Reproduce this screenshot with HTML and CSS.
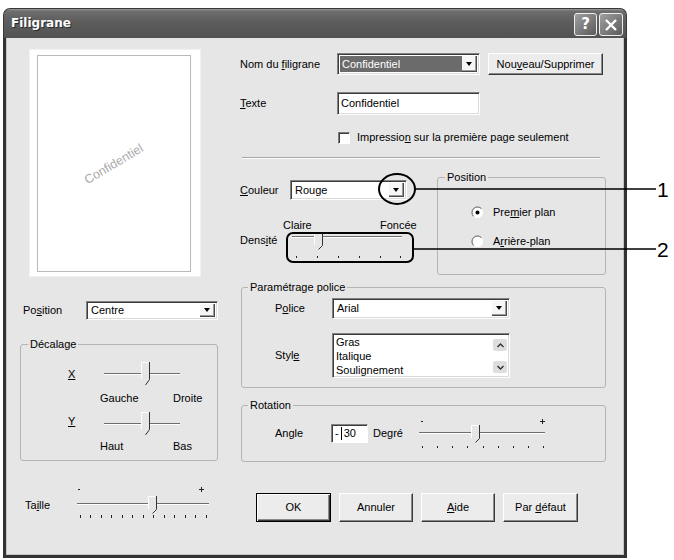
FILE: index.html
```html
<!DOCTYPE html>
<html lang="fr">
<head>
<meta charset="utf-8">
<title>Filigrane</title>
<link rel="stylesheet" href="styles.css">
</head>
<body>
<div class="stage">
  <div class="window">
    <div class="titlebar">
      <span class="title">Filigrane</span>
      <div class="tb-btns">
        <span class="tb-btn help">?</span>
        <span class="tb-btn close"><svg width="14" height="14" viewBox="0 0 14 14"><path d="M2 2L12 12M12 2L2 12" stroke="#fff" stroke-width="2.4"/></svg></span>
      </div>
    </div>
    <div class="client">
      <div class="left">
        <div class="preview"><div class="page"><span class="wm">Confidentiel</span></div></div>
        <div class="pos-row">
          <span class="lbl">Po<u>s</u>ition</span>
          <div class="combo w132"><span class="val">Centre</span><span class="arrow"></span></div>
        </div>
        <fieldset class="group dec">
          <legend>Décalage</legend>
          <div class="dec-grid">
            <span class="axis"><u>X</u></span>
            <svg class="sl" width="82" height="26" viewBox="0 0 82 26">
              <rect x="4" y="12" width="76" height="1" fill="#6e6e6e"/>
              <rect x="4" y="13" width="76" height="1" fill="#fff"/>
              <path d="M41 1H49V18L45 24L41 18Z" fill="#e6e6e6"/>
              <path d="M41.5 18V1.5H48.5" fill="none" stroke="#fff"/>
              <path d="M49.5 1V18.5L45.5 24" fill="none" stroke="#333"/>
            </svg>
            <span></span>
            <div class="ends"><span>Gauche</span><span>Droite</span></div>
            <span class="axis"><u>Y</u></span>
            <svg class="sl" width="82" height="26" viewBox="0 0 82 26">
              <rect x="4" y="12" width="76" height="1" fill="#6e6e6e"/>
              <rect x="4" y="13" width="76" height="1" fill="#fff"/>
              <path d="M41 1H49V18L45 24L41 18Z" fill="#e6e6e6"/>
              <path d="M41.5 18V1.5H48.5" fill="none" stroke="#fff"/>
              <path d="M49.5 1V18.5L45.5 24" fill="none" stroke="#333"/>
            </svg>
            <span></span>
            <div class="ends"><span>Haut</span><span>Bas</span></div>
          </div>
        </fieldset>
        <div class="taille-row">
          <span class="lbl">Ta<u>i</u>lle</span>
          <svg class="sl" width="140" height="37" viewBox="0 0 140 37">
            <rect x="6" y="5" width="2" height="1" fill="#222"/>
            <rect x="127" y="5" width="5" height="1" fill="#222"/>
            <rect x="129" y="3" width="1" height="5" fill="#222"/>
            <rect x="5" y="19" width="132" height="1" fill="#6e6e6e"/>
            <rect x="5" y="20" width="132" height="1" fill="#fff"/>
            <path d="M76 12H84V25L80 29L76 25Z" fill="#e6e6e6"/>
            <path d="M76.5 25V12.5H83.5" fill="none" stroke="#fff"/>
            <path d="M84.5 12V25.5L80.5 29.5" fill="none" stroke="#333"/>
            <g fill="#222">
              <rect x="8" y="31" width="1" height="3"/><rect x="18" y="31" width="1" height="3"/><rect x="29" y="31" width="1" height="3"/><rect x="39" y="31" width="1" height="3"/><rect x="50" y="31" width="1" height="3"/><rect x="60" y="31" width="1" height="3"/><rect x="71" y="31" width="1" height="3"/><rect x="81" y="31" width="1" height="3"/><rect x="92" y="31" width="1" height="3"/><rect x="102" y="31" width="1" height="3"/><rect x="113" y="31" width="1" height="3"/><rect x="123" y="31" width="1" height="3"/><rect x="134" y="31" width="1" height="3"/>
            </g>
          </svg>
        </div>
      </div>

      <div class="right">
        <div class="r-row r1">
          <span class="lbl w97">Nom du <u>f</u>iligrane</span>
          <div class="combo w143"><span class="val sel">Confidentiel</span><span class="arrow"></span></div>
          <span class="btn nouv"><span>Nou<u>v</u>eau/Supprimer</span></span>
        </div>
        <div class="r-row r2">
          <span class="lbl w97"><u>T</u>exte</span>
          <div class="edit w143">Confidentiel</div>
        </div>
        <div class="r-row r3">
          <span class="check"></span>
          <span>Impressio<u>n</u> sur la première page seulement</span>
        </div>
        <div class="sep"></div>
        <div class="mid">
          <div class="mid-left">
            <div class="r-row couleur">
              <span class="lbl w50"><u>C</u>ouleur</span>
              <div class="combo w117"><span class="val">Rouge</span><span class="arrow"></span></div>
            </div>
            <div class="cf"><span class="claire">Claire</span><span>Foncée</span></div>
            <div class="dens">
              <span class="lbl w48">Dens<u>i</u>té</span>
              <svg class="sl" width="120" height="28" viewBox="0 0 120 28">
                <rect x="4" y="4" width="110" height="1" fill="#6e6e6e"/>
                <rect x="4" y="5" width="110" height="1" fill="#fff"/>
                <path d="M26 0H34V13L30 17L26 13Z" fill="#e6e6e6"/>
                <path d="M26.5 13V0.5H33.5" fill="none" stroke="#fff"/>
                <path d="M34.5 0V13.5L30.5 17.5" fill="none" stroke="#333"/>
                <g fill="#222">
                  <rect x="8" y="24" width="1" height="2"/><rect x="29" y="24" width="1" height="2"/><rect x="50" y="24" width="1" height="2"/><rect x="71" y="24" width="1" height="2"/><rect x="92" y="24" width="1" height="2"/><rect x="112" y="24" width="1" height="2"/>
                </g>
              </svg>
            </div>
          </div>
          <fieldset class="group posg">
            <legend>Position</legend>
            <div class="radio-row first">
              <svg width="13" height="13" viewBox="0 0 13 13"><circle cx="6.5" cy="6.5" r="5.5" fill="#fff"/><path d="M2.6 10.4A5.5 5.5 0 0 1 10.4 2.6" stroke="#555" fill="none"/><circle cx="6.5" cy="6.5" r="2" fill="#000"/></svg>
              <span>Pre<u>m</u>ier plan</span>
            </div>
            <div class="radio-row">
              <svg width="13" height="13" viewBox="0 0 13 13"><circle cx="6.5" cy="6.5" r="5.5" fill="#fff"/><path d="M2.6 10.4A5.5 5.5 0 0 1 10.4 2.6" stroke="#555" fill="none"/></svg>
              <span>A<u>r</u>rière-plan</span>
            </div>
          </fieldset>
        </div>
        <fieldset class="group police">
          <legend>Paramétrage police</legend>
          <div class="g-row pol">
            <span class="lbl w57">P<u>o</u>lice</span>
            <div class="combo w178"><span class="val">Arial</span><span class="arrow"></span></div>
          </div>
          <div class="g-row sty">
            <span class="lbl w57">Styl<u>e</u></span>
            <div class="listbox w178">
              <div class="items"><div>Gras</div><div>Italique</div><div>Soulignement</div></div>
              <div class="sb">
                <span class="sbb"><svg width="7" height="5" viewBox="0 0 7 5"><path d="M0.5 4L3.5 1L6.5 4" fill="none" stroke="#333" stroke-width="1.4"/></svg></span>
                <span class="sbb"><svg width="7" height="5" viewBox="0 0 7 5"><path d="M0.5 1L3.5 4L6.5 1" fill="none" stroke="#333" stroke-width="1.4"/></svg></span>
              </div>
            </div>
          </div>
        </fieldset>
        <fieldset class="group rot">
          <legend>Rotation</legend>
          <div class="g-row ang">
            <span class="lbl w56">Angle</span>
            <div class="spin"><span class="minus">-</span><span class="caret"></span><span>30</span></div>
            <span class="deg">Degré</span>
            <svg class="sl" width="132" height="36" viewBox="0 0 132 36">
              <rect x="5" y="6" width="2" height="1" fill="#222"/>
              <rect x="124" y="6" width="5" height="1" fill="#222"/>
              <rect x="126" y="4" width="1" height="5" fill="#222"/>
              <rect x="3" y="17" width="126" height="1" fill="#6e6e6e"/>
              <rect x="3" y="18" width="126" height="1" fill="#fff"/>
              <path d="M55 10H63V23L59 27L55 23Z" fill="#e6e6e6"/>
              <path d="M55.5 23V10.5H62.5" fill="none" stroke="#fff"/>
              <path d="M63.5 10V23.5L59.5 27.5" fill="none" stroke="#333"/>
              <g fill="#222">
                <rect x="6" y="31" width="1" height="2"/><rect x="21" y="31" width="1" height="2"/><rect x="36" y="31" width="1" height="2"/><rect x="51" y="31" width="1" height="2"/><rect x="67" y="31" width="1" height="2"/><rect x="82" y="31" width="1" height="2"/><rect x="97" y="31" width="1" height="2"/><rect x="112" y="31" width="1" height="2"/><rect x="127" y="31" width="1" height="2"/>
              </g>
            </svg>
          </div>
        </fieldset>
        <div class="btns">
          <span class="btn def"><span>OK</span></span>
          <span class="btn"><span>Annuler</span></span>
          <span class="btn"><span><u>A</u>ide</span></span>
          <span class="btn"><span>Par <u>d</u>éfaut</span></span>
        </div>
      </div>
    </div>
  </div>

  <svg class="annot" width="674" height="560" viewBox="0 0 674 560">
    <ellipse cx="397" cy="189" rx="18" ry="15" fill="none" stroke="#000" stroke-width="2"/>
    <line x1="415" y1="189" x2="656" y2="189" stroke="#000" stroke-width="1.6"/>
    <text x="657" y="197" class="num">1</text>
    <rect x="287" y="233" width="126" height="29" rx="6" fill="none" stroke="#000" stroke-width="2"/>
    <line x1="413" y1="249" x2="656" y2="249" stroke="#000" stroke-width="1.6"/>
    <text x="657" y="257" class="num">2</text>
  </svg>
</div>
</body>
</html>
```

FILE: styles.css
```css
* { box-sizing: border-box; }
html, body { margin: 0; padding: 0; }
body {
  background: #fff;
  font: 11px/13px "Liberation Sans", Arial, sans-serif;
  color: #000;
}
u { text-decoration: underline; text-underline-offset: 1px; }

.stage {
  position: relative;
  width: 674px;
  height: 560px;
  padding: 8px 0 0 3px;
  overflow: hidden;
}

.window {
  width: 624px;
  height: 550px;
  display: flex;
  flex-direction: column;
}

/* ---------- title bar ---------- */
.titlebar {
  flex: none;
  height: 30px;
  display: flex;
  align-items: flex-start;
  padding: 0 3px 0 7px;
  border: 1px solid #3a3a3a;
  border-bottom: 0;
  border-radius: 7px 7px 0 0;
  background: linear-gradient(#9a9a9a 0, #6e6e6e 2px, #5e5e5e 40%, #525252 100%);
}
.title {
  flex: 1;
  margin-top: 6px;
  color: #fff;
  font: bold 12px/16px "DejaVu Sans", sans-serif;
  text-shadow: 1px 1px 0 #2a2a2a;
}
.tb-btns { display: flex; gap: 2px; margin-top: 4px; }
.tb-btn {
  width: 23px;
  height: 23px;
  border: 1px solid #eeeeee;
  border-radius: 3px;
  background: linear-gradient(135deg, #a0a0a0, #5a5a5a);
  display: flex;
  align-items: center;
  justify-content: center;
  color: #fff;
  font: bold 15px/1 "DejaVu Sans", sans-serif;
}
.tb-btn.close { width: 24px; }

/* ---------- client area ---------- */
.client {
  flex: 1;
  display: flex;
  background: #e6e6e6;
  border: 3px solid #333;
  border-top: 0;
  box-shadow: inset 1px 0 #c4c4c4, inset -1px -1px #c4c4c4;
  padding: 12px 0 0 14px;
}

.lbl { flex: none; white-space: nowrap; }
.w48 { width: 48px; }
.w50 { width: 50px; }
.w56 { width: 56px; }
.w57 { width: 57px; }
.w97 { width: 97px; }
.w117 { width: 117px; }
.w132 { width: 132px; }
.w143 { width: 143px; }
.w178 { width: 178px; }

/* combo box */
.combo {
  flex: none;
  display: flex;
  height: 100%;
  background: #fff;
  border: 1px solid;
  border-color: #828282 #fff #fff #828282;
  box-shadow: inset 1px 1px #3c3c3c, inset -1px -1px #dadada;
  padding: 2px;
}
.combo .val {
  flex: 1;
  display: flex;
  align-items: center;
  padding-left: 2px;
  white-space: nowrap;
  overflow: hidden;
}
.combo .val.sel { background: #6b6b6b; color: #fff; }
.arrow {
  flex: none;
  width: 15px;
  display: flex;
  align-items: center;
  justify-content: center;
  background: #f6f6f6;
  border-right: 1px solid #4a4a4a;
  border-bottom: 1px solid #4a4a4a;
  box-shadow: inset -1px -1px #9a9a9a;
}
.arrow::before {
  content: "";
  border-left: 3.5px solid transparent;
  border-right: 3.5px solid transparent;
  border-top: 4px solid #000;
}

.edit {
  flex: none;
  height: 100%;
  background: #fff;
  border: 1px solid;
  border-color: #828282 #fff #fff #828282;
  box-shadow: inset 1px 1px #3c3c3c, inset -1px -1px #dadada;
  padding: 0 3px;
  display: flex;
  align-items: center;
}

.btn {
  flex: none;
  display: flex;
  align-items: center;
  justify-content: center;
  background: #ececec;
  border: 1px solid;
  border-color: #fff #3a3a3a #3a3a3a #fff;
  box-shadow: inset -1px -1px #8a8a8a;
  white-space: nowrap;
}
.btn.def {
  border: 1px solid #000;
  box-shadow: inset 1px 1px #fff, inset -1px -1px #3a3a3a, inset -2px -2px #8a8a8a;
}

/* group boxes */
.group {
  margin: 0;
  padding: 0;
  min-width: 0;
  border: 1px solid #b4b4b4;
  border-radius: 3px;
}
.group legend {
  padding: 0 2px;
  margin-left: 7px;
  line-height: 14px;
}

/* ---------- left column ---------- */
.left {
  flex: none;
  width: 198px;
  display: flex;
  flex-direction: column;
}
.preview {
  flex: none;
  margin-left: 10px;
  width: 170px;
  height: 226px;
  background: #fff;
  padding: 5px 9px 4px 7px;
  box-shadow: 0 0 0 1px #f2f2f2;
}
.page {
  height: 100%;
  border: 1px solid #b9b9b9;
  display: flex;
  align-items: center;
  justify-content: center;
}
.wm {
  color: #a9a9a9;
  font-size: 12.5px;
  transform: rotate(-31deg);
  margin-top: 2px;
}
.pos-row {
  flex: none;
  display: flex;
  align-items: center;
  height: 19px;
  margin-top: 25px;
}
.pos-row .lbl { margin-left: 3px; width: 63px; }

.dec { margin-top: 17px; }
.dec-grid {
  display: grid;
  grid-template-columns: 32px 105px;
  grid-template-rows: 26px 18px 32px 16px;
  align-items: end;
  padding: 10px 0 7px 47px;
}
.axis { align-self: center; }
.sl { display: block; }
.ends {
  display: grid;
  grid-template-columns: 73px auto;
  line-height: 14px;
}

.taille-row {
  flex: none;
  display: flex;
  align-items: flex-start;
  margin-top: 23px;
}
.taille-row .lbl { margin-left: 5px; width: 47px; margin-top: 15px; }

/* ---------- right column ---------- */
.right {
  flex: none;
  width: 366px;
  margin-left: 22px;
  padding-top: 3px;
  display: flex;
  flex-direction: column;
}
.r-row { flex: none; display: flex; align-items: center; }
.r1 { height: 22px; }
.nouv { margin-left: 8px; width: 115px; height: 22px; }
.r2 { height: 23px; margin-top: 17px; }
.r3 { height: 13px; margin-top: 16px; }
.check {
  flex: none;
  width: 12px;
  height: 12px;
  margin-left: 98px;
  margin-right: 7px;
  background: #fff;
  border: 1px solid;
  border-color: #7a7a7a #fff #fff #7a7a7a;
  box-shadow: inset 1px 1px #3c3c3c;
}
.sep {
  flex: none;
  margin: 13px 0 0 2px;
  width: 358px;
  height: 2px;
  border-top: 1px solid #a6a6a6;
  border-bottom: 1px solid #fff;
}

.mid { flex: none; display: flex; }
.mid-left { flex: none; width: 197px; display: flex; flex-direction: column; }
.couleur { height: 20px; margin-top: 21px; }
.cf { display: flex; height: 14px; line-height: 14px; margin-top: 18px; }
.claire { margin-left: 43px; width: 97px; }
.dens { display: flex; align-items: flex-start; }
.dens .lbl { margin-top: 2px; }

.posg { width: 169px; margin-top: 11px; padding-bottom: 26px; }
.radio-row { display: flex; align-items: center; height: 13px; margin-top: 16px; }
.radio-row.first { margin-top: 22px; }
.radio-row svg { margin-left: 33px; margin-right: 9px; flex: none; }

.police { margin-top: 5px; margin-left: 1px; width: 365px; padding-bottom: 9px; }
.police legend, .rot legend { margin-left: 6px; }
.g-row { display: flex; align-items: center; }
.g-row .lbl { margin-left: 33px; }
.pol { height: 21px; margin-top: 4px; }
.sty { height: 45px; margin-top: 14px; }
.listbox {
  flex: none;
  height: 100%;
  display: flex;
  background: #fff;
  border: 1px solid;
  border-color: #828282 #fff #fff #828282;
  box-shadow: inset 1px 1px #3c3c3c, inset -1px -1px #dadada;
  padding: 1px 2px 1px 3px;
}
.items { flex: 1; line-height: 14px; }
.sb {
  flex: none;
  width: 14px;
  display: flex;
  flex-direction: column;
  justify-content: space-between;
  padding: 4px 0 3px;
}
.sbb {
  height: 12px;
  display: flex;
  align-items: center;
  justify-content: center;
  background: #dedede;
  border-radius: 2px;
}

.rot { margin-top: 10px; margin-left: 1px; width: 365px; padding-bottom: 10px; }
.ang { height: 36px; margin-top: 3px; }
.spin {
  flex: none;
  width: 37px;
  height: 19px;
  display: flex;
  align-items: center;
  background: #fff;
  border: 1px solid;
  border-color: #828282 #fff #fff #828282;
  box-shadow: inset 1px 1px #3c3c3c;
  padding-left: 3px;
}
.caret { width: 1px; height: 13px; background: #000; margin: 0 2px 0 2px; }
.deg { flex: none; width: 43px; margin-left: 5px; }

.btns {
  flex: none;
  display: flex;
  gap: 8px;
  margin: 31px 0 0 16px;
  height: 29px;
}
.btns .btn { width: 74px; }
.btns .btn.def { width: 75px; }
.btns .btn:last-child { width: 75px; }

/* ---------- annotations ---------- */
.annot {
  position: absolute;
  left: 0;
  top: 0;
  pointer-events: none;
}
.num {
  font: 21px "Liberation Sans", Arial, sans-serif;
  fill: #000;
}
```
